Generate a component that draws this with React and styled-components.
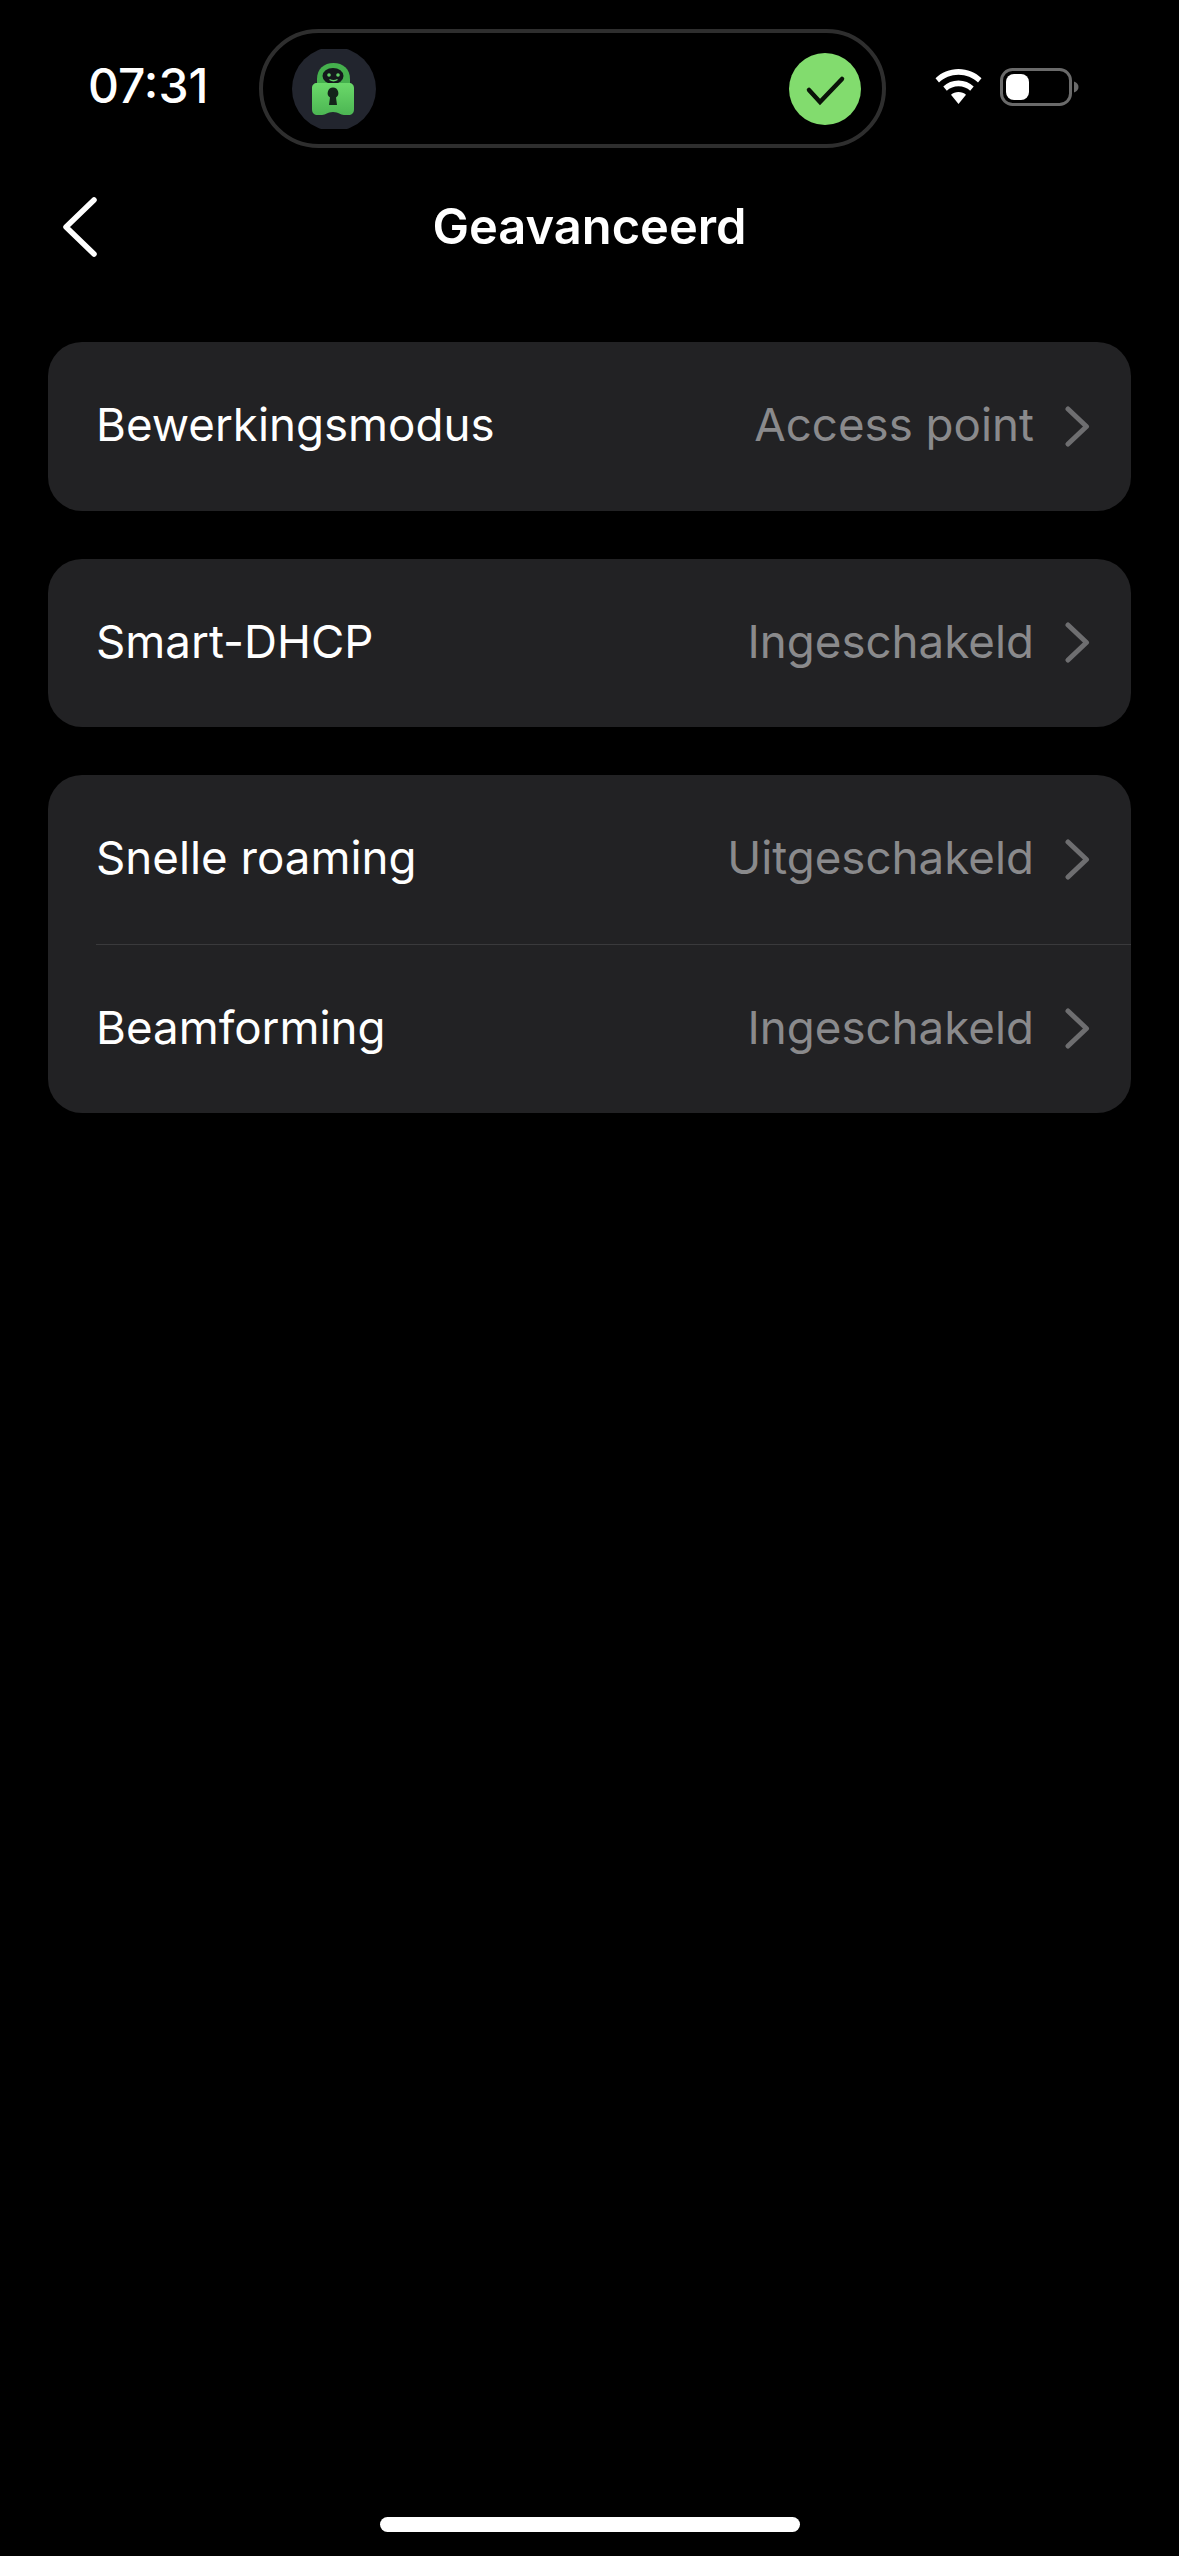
import React from "react"
import styled, { createGlobalStyle } from "styled-components"

const GlobalStyle = createGlobalStyle`
html, body {
  margin: 0;
  padding: 0;
  background: #000;
}
* {
  box-sizing: border-box;
}
`

const Tela = styled.div`
  width: 1179px;
  height: 2556px;
  background: #000;
  color: #fff;
  font-family: Inter, "Liberation Sans", sans-serif;
  display: flex;
  flex-direction: column;
`

const StatusBar = styled.div`
  display: flex;
  align-items: center;
  height: 119px;
  margin-top: 29px;
  padding-left: 88px;
`

const Clock = styled.div`
  width: 171px;
  font-size: 48px;
  font-weight: 500;
  line-height: 1;
  margin-top: -5px;
`

const Island = styled.div`
  width: 627px;
  height: 119px;
  border: 4px solid #2e2e2e;
  border-radius: 60px;
  display: flex;
  align-items: center;
  justify-content: space-between;
  padding: 0 21px 0 29px;
`

const StatusIcons = styled.div`
  display: flex;
  align-items: center;
  gap: 18px;
  margin-left: 49px;
  margin-top: -4px;
`

const Nav = styled.div`
  display: grid;
  grid-template-columns: 1fr auto 1fr;
  align-items: center;
  height: 100px;
  margin-top: 28px;
  padding: 0 63px;
`

const Title = styled.h1`
  margin: 2px 0 0;
  font-size: 48.800px;
  font-weight: 600;
  line-height: 1;
`

const Content = styled.div`
  display: flex;
  flex-direction: column;
  gap: 48px;
  margin: 66px 48px 0 48px;
`

const Card = styled.div`
  background: #222224;
  border-radius: 34px;
`

const Row = styled.div`
  display: flex;
  align-items: center;
  justify-content: space-between;
  height: 168.500px;
  padding: 0 41px 0 48px;
`

const Label = styled.span`
  font-size: 45.700px;
  font-weight: 380;
  line-height: 1;
  margin-top: -2px;
`

const Right = styled.div`
  display: flex;
  align-items: center;
  gap: 31px;
`

const Value = styled.span`
  font-size: 45.700px;
  font-weight: 380;
  line-height: 1;
  margin-top: -2px;
  color: #8a8a8c;
`

const Divider = styled.div`
  height: 1px;
  margin-left: 48px;
  background: #3a3a3c;
`

const HomeBar = styled.div`
  width: 420px;
  height: 15px;
  border-radius: 8px;
  background: #fff;
  margin: auto auto 24px;
`

const LockLogo = () => (
  <svg width="84" height="80" viewBox="0 0 84 80">
    <defs>
      <linearGradient id="lockBody" x1="0" y1="0" x2="0" y2="1">
        <stop offset="0" stopColor="#6bd96a" />
        <stop offset="1" stopColor="#4cb653" />
      </linearGradient>
    </defs>
    <circle cx="42" cy="40" r="42" fill="#22252e" />
    <path d="M25 36V30C25 20 32 14 41.500 14S58 20 58 30V36Z" fill="#45b04d" />
    <ellipse cx="41" cy="27" rx="10.500" ry="8" fill="#14181c" />
    <circle cx="37" cy="26" r="1.800" fill="#62d066" />
    <circle cx="46" cy="26" r="1.800" fill="#62d066" />
    <path d="M37.500 30.500Q41.500 33 45.500 30.500" stroke="#62d066" strokeWidth="1.300" fill="none" />
    <path d="M25 34H57C60 34 62 36 62 39V60C62 64 60 66 56 66H52C48 66 47 63 41 63S34 66 30 66H26C22 66 20 64 20 60V39C20 36 22 34 25 34Z" fill="url(#lockBody)" />
    <path d="M41 38.500A5.500 5.500 0 0 1 44 48.500L45 56H37L38 48.500A5.500 5.500 0 0 1 41 38.500Z" fill="#14241a" />
  </svg>
)

const CheckBadge = () => (
  <svg width="72" height="72" viewBox="0 0 72 72">
    <circle cx="36" cy="36" r="36" fill="#82dc6e" />
    <path d="M20 37L31 49L53 26" stroke="#0a1208" strokeWidth="4.500" strokeLinecap="round" strokeLinejoin="miter" fill="none" />
  </svg>
)

const WifiIcon = () => (
  <svg width="47" height="35" viewBox="0 0 47 35">
    <path d="M23.500 0C14.500 0 6.500 3.500 0.500 9.200L4 13.500C9 8.800 16 5.800 23.500 5.800S38 8.800 43 13.500L46.500 9.200C40.500 3.500 32.500 0 23.500 0Z" fill="#fff" />
    <path d="M23.500 11.500C17.500 11.500 12.300 13.800 8.300 17.500L11.800 21.800C14.800 19 19 17.300 23.500 17.300S32.200 19 35.200 21.800L38.700 17.500C34.700 13.800 29.500 11.500 23.500 11.500Z" fill="#fff" />
    <path d="M23.500 23C20.500 23 18 24 16 25.800L23.500 35L31 25.800C29 24 26.500 23 23.500 23Z" fill="#fff" />
  </svg>
)

const BatteryIcon = () => (
  <svg width="79" height="38" viewBox="0 0 79 38">
    <rect x="1.500" y="1.500" width="69" height="35" rx="11" fill="none" stroke="#6a6a6a" strokeWidth="3" />
    <rect x="6" y="6" width="23" height="26" rx="8" fill="#fff" />
    <path d="M74 13.500C77 14.500 78.500 16.500 78.500 19S77 23.500 74 24.500Z" fill="#6a6a6a" />
  </svg>
)

const BackIcon = () => (
  <svg width="34" height="62" viewBox="0 0 34 62">
    <path d="M31 5L3 32L31 59" stroke="#fff" strokeWidth="5.500" strokeLinecap="round" strokeLinejoin="round" fill="none" />
  </svg>
)

const Chevron = () => (
  <svg width="25" height="41" viewBox="0 0 25 41">
    <path d="M3 3L21.500 20.500L3 38" stroke="#6e6e70" strokeWidth="5" strokeLinecap="round" strokeLinejoin="round" fill="none" />
  </svg>
)

const SettingRow = ({ label, value }) => (
  <Row>
    <Label>{label}</Label>
    <Right>
      <Value>{value}</Value>
      <Chevron />
    </Right>
  </Row>
)

export default function App() {
  return (
    <Tela>
      <GlobalStyle />
      <StatusBar>
        <Clock>07:31</Clock>
        <Island>
          <LockLogo />
          <CheckBadge />
        </Island>
        <StatusIcons>
          <WifiIcon />
          <BatteryIcon />
        </StatusIcons>
      </StatusBar>
      <Nav>
        <BackIcon />
        <Title>Geavanceerd</Title>
      </Nav>
      <Content>
        <Card>
          <SettingRow label="Bewerkingsmodus" value="Access point" />
        </Card>
        <Card>
          <SettingRow label="Smart-DHCP" value="Ingeschakeld" />
        </Card>
        <Card>
          <SettingRow label="Snelle roaming" value="Uitgeschakeld" />
          <Divider />
          <SettingRow label="Beamforming" value="Ingeschakeld" />
        </Card>
      </Content>
      <HomeBar />
    </Tela>
  )
}
